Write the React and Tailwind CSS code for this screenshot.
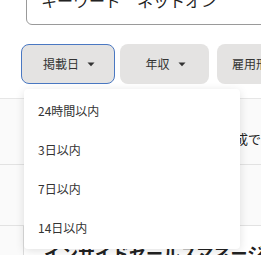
import React from "react";

const font = { fontFamily: '"Noto Sans CJK JP", "Noto Sans", sans-serif' };

const Caret = () => (
  <svg width="8" height="5" viewBox="0 0 8 5" className="ml-[8px]">
    <path d="M0.5 0.5 L7.5 0.5 L4 4.2 Z" fill="#333" />
  </svg>
);

const FilterButton = ({ label, width, active, caret = true, className = "" }) => (
  <button
    className={
      "flex h-[40px] shrink-0 items-center rounded-[8px] bg-[#e4e3e2] text-[12px] text-[#333] " +
      (active ? "border border-[#4a78c2] " : "border border-transparent ") +
      (caret ? "justify-center " : "justify-start pl-[14px] ") +
      className
    }
    style={{ width }}
  >
    <span className={caret ? "ml-[2px]" : ""}>{label}</span>
    {caret && <Caret />}
  </button>
);

const options = ["24時間以内", "3日以内", "7日以内", "14日以内"];

export default function App() {
  return (
    <div
      className="relative h-[255px] w-[261px] overflow-hidden bg-white"
      style={font}
    >
      {/* keyword input, scrolled partly off the top */}
      <div className="-mt-[20px] pl-[26px]">
        <div className="flex h-[45px] w-[260px] items-center rounded-[6px] border border-[#9a9a9a] pl-[14px] text-[16px] text-[#222]">
          <span className="mt-[-6px]">キーワード　ネットオン</span>
        </div>
      </div>

      {/* filter buttons */}
      <div className="mt-[19px] flex gap-[5px] pl-[21px]">
        <FilterButton label="掲載日" width="94px" active />
        <FilterButton label="年収" width="89px" />
        <FilterButton label="雇用形態" width="80px" caret={false} className="ml-[3px]" />
      </div>

      {/* job list behind the menu */}
      <div className="mt-[14px] border-t border-[#e6e6e6] bg-[#fafafa]">
        <div className="flex h-[65px] items-end justify-end pb-[16px]">
          <span className="whitespace-nowrap text-[13px] text-[#222]">
            作成で
          </span>
        </div>
        <div className="h-[61px] border-t border-[#e2e2e2]" />
        <div className="border-t border-[#e2e2e2] pl-[23px]">
          <div className="h-[40px] border-l border-[#dcdcdc] bg-white pl-[20px] pt-[14px]">
            <span className="whitespace-nowrap text-[17px] font-bold text-[#222]">
              インサイドセールスマネージャー
            </span>
          </div>
        </div>
      </div>

      {/* dropdown menu */}
      <div className="absolute left-[24px] top-[89px] w-[216px] rounded-[4px] bg-white py-[2px] shadow-[0_2px_10px_rgba(0,0,0,0.12)]">
        {options.map((o) => (
          <div
            key={o}
            className="flex h-[39px] items-center pl-[14px] text-[12px] text-[#333]"
          >
            {o}
          </div>
        ))}
      </div>
    </div>
  );
}
